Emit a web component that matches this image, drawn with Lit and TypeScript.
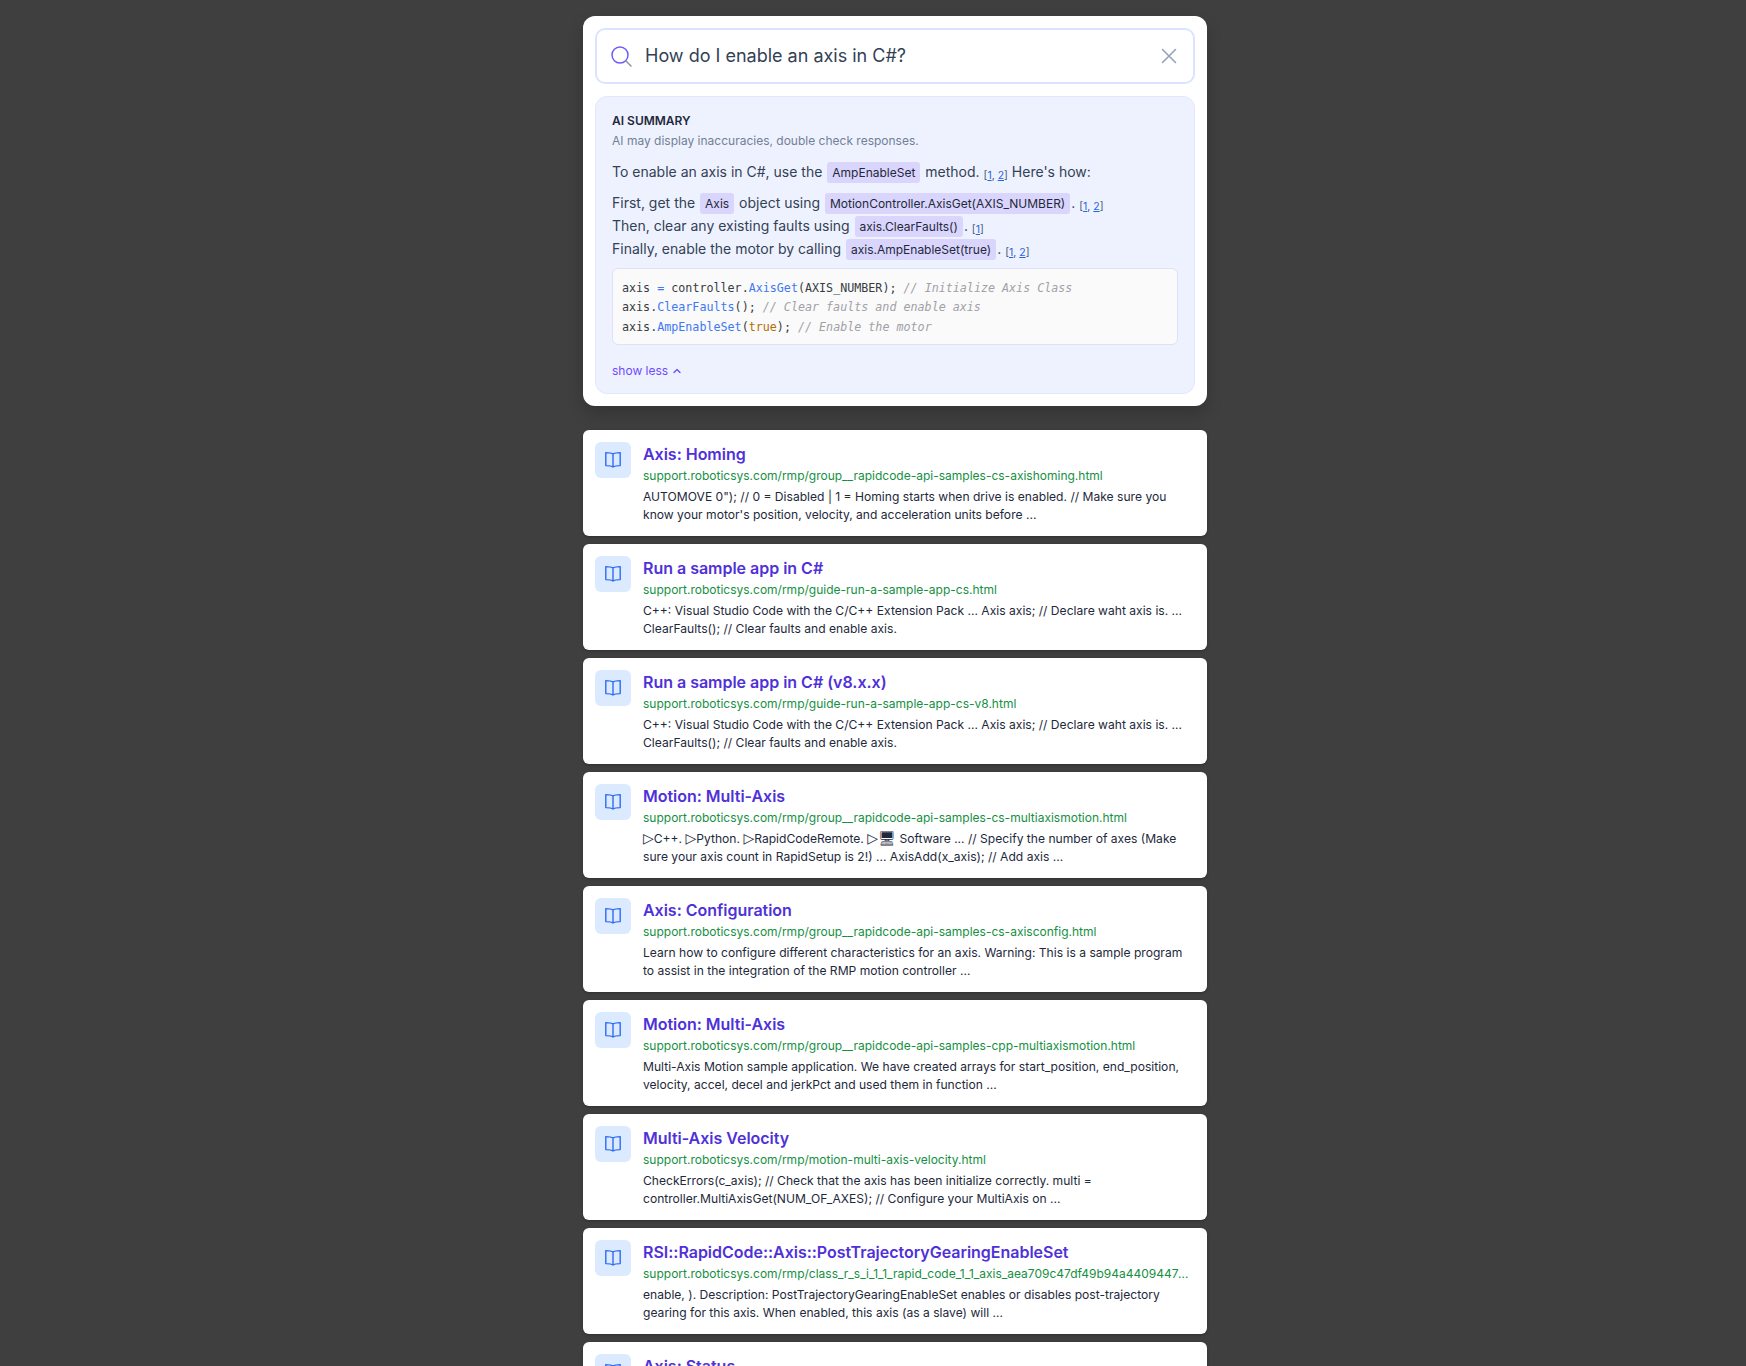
import { LitElement, html, css } from "lit";
import { customElement } from "lit/decorators.js";

const results = [
  ["Axis: Homing", "support.roboticsys.com/rmp/group__rapidcode-api-samples-cs-axishoming.html", html`AUTOMOVE 0"); // 0 = Disabled | 1 = Homing starts when drive is enabled. // Make sure you know your motor's position, velocity, and acceleration units before ...`],
  ["Run a sample app in C#", "support.roboticsys.com/rmp/guide-run-a-sample-app-cs.html", "C++: Visual Studio Code with the C/C++ Extension Pack ... Axis axis; // Declare waht axis is. ... ClearFaults(); // Clear faults and enable axis."],
  ["Run a sample app in C# (v8.x.x)", "support.roboticsys.com/rmp/guide-run-a-sample-app-cs-v8.html", "C++: Visual Studio Code with the C/C++ Extension Pack ... Axis axis; // Declare waht axis is. ... ClearFaults(); // Clear faults and enable axis."],
  ["Motion: Multi-Axis", "support.roboticsys.com/rmp/group__rapidcode-api-samples-cs-multiaxismotion.html", html`<span class="g">▷</span>C++. <span class="g">▷</span>Python. <span class="g">▷</span>RapidCodeRemote. <span class="g">▷</span><span class="g">🖥</span> Software ... // Specify the number of axes (Make sure your axis count in RapidSetup is 2!) ... AxisAdd(x_axis); // Add axis ...`],
  ["Axis: Configuration", "support.roboticsys.com/rmp/group__rapidcode-api-samples-cs-axisconfig.html", "Learn how to configure different characteristics for an axis. Warning: This is a sample program to assist in the integration of the RMP motion controller ..."],
  ["Motion: Multi-Axis", "support.roboticsys.com/rmp/group__rapidcode-api-samples-cpp-multiaxismotion.html", "Multi-Axis Motion sample application. We have created arrays for start_position, end_position, velocity, accel, decel and jerkPct and used them in function ..."],
  ["Multi-Axis Velocity", "support.roboticsys.com/rmp/motion-multi-axis-velocity.html", "CheckErrors(c_axis); // Check that the axis has been initialize correctly. multi = controller.MultiAxisGet(NUM_OF_AXES); // Configure your MultiAxis on ..."],
  ["RSI::RapidCode::Axis::PostTrajectoryGearingEnableSet", "support.roboticsys.com/rmp/class_r_s_i_1_1_rapid_code_1_1_axis_aea709c47df49b94a4409447d3f1f2d0c.html", "enable, ). Description: PostTrajectoryGearingEnableSet enables or disables post-trajectory gearing for this axis. When enabled, this axis (as a slave) will ..."],
  ["Axis: Status", "support.roboticsys.com/rmp/group__rapidcode-api-samples-cs-axisstatus.html", "Learn how to read the status of an axis."],
];

@customElement("app-root")
export class AppRoot extends LitElement {
  static styles = css`
    :host {
      display: block;
      height: 100vh;
      overflow: hidden;
      background: #3f3f3f;
      font-family: Inter, "Liberation Sans", sans-serif;
      color: #1e293b;
    }
    .col {
      width: 624px;
      margin-left: 583px;
      padding-top: 16px;
      display: flex;
      flex-direction: column;
      gap: 8px;
    }
    .panel {
      background: #fff;
      border-radius: 12px;
      padding: 12px;
      display: flex;
      flex-direction: column;
      gap: 12px;
      margin-bottom: 16px;
      box-shadow: 0 8px 16px rgba(0, 0, 0, 0.18);
    }
    .search {
      height: 56px;
      box-sizing: border-box;
      border: 2px solid #dbe4fe;
      border-radius: 10px;
      display: flex;
      align-items: center;
      padding: 0 14px 1px 12px;
      gap: 12px;
      font-size: 18px;
      color: #334155;
    }
    .search .q { flex: 1; }
    .search svg { display: block; flex: none; }
    .sum {
      background: #eef2ff;
      border: 1px solid #e0e7ff;
      border-radius: 12px;
      padding: 16px 16px 12px;
      font-size: 14px;
      line-height: 23px;
      color: #334155;
    }
    .sum h2 {
      margin: 0;
      font-size: 12px;
      font-weight: 600;
      line-height: 16px;
      color: #1e293b;
    }
    .sub {
      font-size: 12px;
      line-height: 16px;
      color: #718096;
      margin: 4px 0 11px;
    }
    .sum p { margin: 0 0 8px; }
    code {
      font-family: Inter, "Liberation Sans", sans-serif;
      font-size: 12px;
      line-height: 1;
      background: #dad5fc;
      border-radius: 3px;
      padding: 3px 5px;
      margin: 0 1px;
      color: #1e293b;
    }
    .cite { font-size: 10.5px; line-height: 1; color: #475569; vertical-align: -1.5px; }
    .cite span { color: #2563eb; text-decoration: underline; }
    pre {
      margin: 8px 0 0;
      background: #fafafa;
      border: 1px solid #e0e0f8;
      border-radius: 6px;
      padding: 10px 9px 8px;
      font-family: "DejaVu Sans Mono", monospace;
      font-size: 11.7px;
      line-height: 19.3px;
      color: #383a42;
      height: 57px;
    }
    .fn { color: #4078f2; }
    .kw { color: #b76b01; }
    .cm { color: #a0a1a7; font-style: italic; }
    .more {
      display: flex;
      align-items: center;
      gap: 4px;
      margin-top: 16px;
      font-size: 12px;
      line-height: 20px;
      color: #6d4aff;
    }
    .card {
      background: #fff;
      border-radius: 6px;
      height: 106px;
      box-sizing: border-box;
      padding: 12px 16px 0 12px;
      display: flex;
      gap: 12px;
      flex: none;
      box-shadow: 0 1px 3px rgba(0, 0, 0, 0.25);
    }
    .ico {
      width: 36px;
      height: 36px;
      border-radius: 6px;
      background: #dbeafe;
      flex: none;
      display: flex;
      align-items: center;
      justify-content: center;
    }
    .body { min-width: 0; flex: 1; }
    .t {
      font-size: 16px;
      font-weight: 600;
      line-height: 24px;
      letter-spacing: -0.02px;
      color: #4f31d9;
    }
    .u {
      font-size: 12px;
      line-height: 18px;
      color: #15903f;
      white-space: nowrap;
      overflow: hidden;
      text-overflow: ellipsis;
      margin-top: 1px;
    }
    .d {
      font-size: 12.1px;
      line-height: 18px;
      color: #1e293b;
      margin-top: 3px;
    }
    .g { font-family: "DejaVu Sans", sans-serif; font-size: 14px; line-height: 1; }
  `;

  cite(...n: number[]) {
    return html`<span class="cite">[${n.map((x, i) => html`${i ? ", " : ""}<span>${x}</span>`)}]</span>`;
  }

  render() {
    return html`<div class="col">
      <section class="panel">
        <div class="search">
          <svg width="24" height="24" viewBox="0 0 24 24" fill="none" stroke="#6d5cf5" stroke-width="1.5" stroke-linecap="round">
            <circle cx="11" cy="11" r="8"></circle>
            <path d="M17 17l5 5" stroke="#8a94a8"></path>
          </svg>
          <div class="q">How do I enable an axis in C#?</div>
          <svg width="20" height="20" viewBox="0 0 20 20" fill="none" stroke="#94a3b8" stroke-width="1.6" stroke-linecap="round">
            <path d="M3.500 3.500l13 13M16.500 3.500l-13 13"></path>
          </svg>
        </div>
        <div class="sum">
          <h2>AI SUMMARY</h2>
          <div class="sub">AI may display inaccuracies, double check responses.</div>
          <p>To enable an axis in C#, use the <code>AmpEnableSet</code> method. ${this.cite(1, 2)} Here's how:</p>
          <div>First, get the <code>Axis</code> object using <code>MotionController.AxisGet(AXIS_NUMBER)</code>. ${this.cite(1, 2)}</div>
          <div>Then, clear any existing faults using <code>axis.ClearFaults()</code>. ${this.cite(1)}</div>
          <div>Finally, enable the motor by calling <code>axis.AmpEnableSet(true)</code>. ${this.cite(1, 2)}</div>
          <pre>axis <span class="fn">=</span> controller.<span class="fn">AxisGet</span>(AXIS_NUMBER); <span class="cm">// Initialize Axis Class</span>
axis.<span class="fn">ClearFaults</span>(); <span class="cm">// Clear faults and enable axis</span>
axis.<span class="fn">AmpEnableSet</span>(<span class="kw">true</span>); <span class="cm">// Enable the motor</span></pre>
          <div class="more">show less
            <svg width="10" height="10" viewBox="0 0 10 10" fill="none" stroke="#6d4aff" stroke-width="1.3" stroke-linecap="round" stroke-linejoin="round"><path d="M2 6.500L5 3.500l3 3"></path></svg>
          </div>
        </div>
      </section>
      ${results.map(
        ([t, u, d]) => html`<article class="card">
          <div class="ico">
            <svg width="18" height="18" viewBox="0 0 18 18" fill="none" stroke="#2f6bf6" stroke-width="1.400" stroke-linejoin="round" stroke-linecap="round">
              <path d="M9 3C7.800 2 6 1.600 1.800 1.600v13c4.200 0 6 .4 7.200 1.400 1.200-1 3-1.400 7.200-1.400v-13C12 1.600 10.200 2 9 3zM9 3v13"></path>
            </svg>
          </div>
          <div class="body">
            <div class="t">${t}</div>
            <div class="u">${u}</div>
            <div class="d">${d}</div>
          </div>
        </article>`
      )}
    </div>`;
  }
}
